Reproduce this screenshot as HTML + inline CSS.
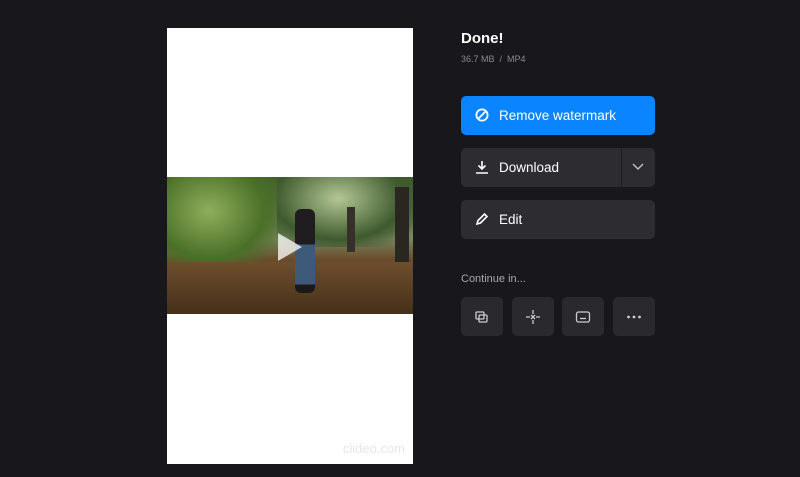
<!DOCTYPE html>
<html><head><meta charset="utf-8"><style>
*{margin:0;padding:0;box-sizing:border-box}
body{width:800px;height:477px;background:#18171c;font-family:"Liberation Sans",sans-serif;position:relative;overflow:hidden}
.vid{position:absolute;left:167px;top:28px;width:246px;height:436px;background:#fff}
.photo{position:absolute;left:0;top:149px;width:246px;height:137px;overflow:hidden;
background:linear-gradient(180deg,#3f5a2a 0%,#56703a 25%,#7a8560 45%,#6a4c2c 60%,#4a3320 80%,#3a2818 100%)}
.wm{position:absolute;right:8px;bottom:8px;color:#e6e6e6;font-size:13px}
.t{position:absolute;color:#fff}
.btn{position:absolute;left:461px;width:194px;height:39px;border-radius:5px;background:#2d2c31;color:#fff;font-size:13.5px;display:flex;align-items:center;padding-left:38px}
.btn svg{position:absolute;left:14px;top:12px}
.sq{position:absolute;top:297px;width:42px;height:39px;border-radius:5px;background:#2a292e}
.sq svg{position:absolute;left:13px;top:12px}
</style></head><body>
<div class="vid">
 <div class="photo">
  <div style="position:absolute;left:-10px;top:-10px;width:130px;height:110px;background:radial-gradient(ellipse at 40% 40%,#8fae5a 0%,#4a7028 50%,transparent 75%)"></div>
  <div style="position:absolute;left:110px;top:-5px;width:136px;height:75px;background:radial-gradient(ellipse at 45% 35%,#b4c694 0%,#3e5a2e 60%,transparent 85%)"></div>
  <div style="position:absolute;left:228px;top:10px;width:14px;height:90px;background:#2a2620"></div>
  <div style="position:absolute;left:180px;top:30px;width:8px;height:45px;background:#35302a"></div>
  <div style="position:absolute;left:0;top:85px;width:246px;height:52px;background:linear-gradient(180deg,#6e4e2c,#44301a)"></div>
  <div style="position:absolute;left:128px;top:32px;width:20px;height:84px;background:linear-gradient(#1f1d1f 0 42%,#3f5a78 42% 90%,#1a1a1a 90%);border-radius:6px"></div>
  <div style="position:absolute;left:111px;top:56px;width:0;height:0;border-left:24px solid rgba(255,255,255,.75);border-top:14px solid transparent;border-bottom:14px solid transparent"></div>
 </div>
 <div class="wm">clideo.com</div>
</div>
<div class="t" style="left:461px;top:30px;font-size:15px;font-weight:bold">Done!</div>
<div class="t" style="left:461px;top:54px;font-size:9px;color:#8a8990">36.7 MB &nbsp;/&nbsp; MP4</div>
<div class="btn" style="top:96px;background:#0a84ff"><svg width="14" height="14" viewBox="0 0 14 14" fill="none" stroke="#fff" stroke-width="1.8"><circle cx="7" cy="7" r="5.6"/><path d="M3 11L11 3"/></svg>Remove watermark</div>
<div class="btn" style="top:148px"><svg width="14" height="14" viewBox="0 0 14 14" fill="none" stroke="#fff" stroke-width="1.6"><path d="M7 1v8M3.5 5.5L7 9l3.5-3.5M1 13h12"/></svg>Download
 <div style="position:absolute;right:33px;top:0;width:1px;height:39px;background:#1e1d22"></div>
 <svg style="left:auto;right:11px;top:15px" width="12" height="8" viewBox="0 0 12 8" fill="none" stroke="#bbb" stroke-width="1.5"><path d="M1 1l5 5 5-5"/></svg></div>
<div class="btn" style="top:200px"><svg width="14" height="14" viewBox="0 0 14 14" fill="none" stroke="#fff" stroke-width="1.6"><path d="M2 12l1-3.5L9.5 2l2.5 2.5L5.5 11z"/></svg>Edit</div>
<div class="t" style="left:461px;top:273px;font-size:11px;color:#a9a8ae">Continue in...</div>
<div class="sq" style="left:461px"><svg width="16" height="16" viewBox="0 0 16 16" fill="none" stroke="#ccc" stroke-width="1.3"><rect x="2" y="3" width="8" height="7" rx="1"/><rect x="5" y="6" width="8" height="7" rx="1"/></svg></div>
<div class="sq" style="left:512px"><svg width="16" height="16" viewBox="0 0 16 16" fill="none" stroke="#ccc" stroke-width="1.3"><path d="M8 1v4M8 11v4M1 8h4M11 8h4M6 6l2 2 2-2M6 10l2-2 2 2"/></svg></div>
<div class="sq" style="left:562px"><svg width="16" height="16" viewBox="0 0 16 16" fill="none" stroke="#ccc" stroke-width="1.3"><rect x="1.5" y="3" width="13" height="10" rx="2"/><path d="M5 9.5h6"/></svg></div>
<div class="sq" style="left:613px"><svg width="16" height="16" viewBox="0 0 16 16" fill="#ccc"><circle cx="2.5" cy="8" r="1.4"/><circle cx="8" cy="8" r="1.4"/><circle cx="13.5" cy="8" r="1.4"/></svg></div>
</body></html>
